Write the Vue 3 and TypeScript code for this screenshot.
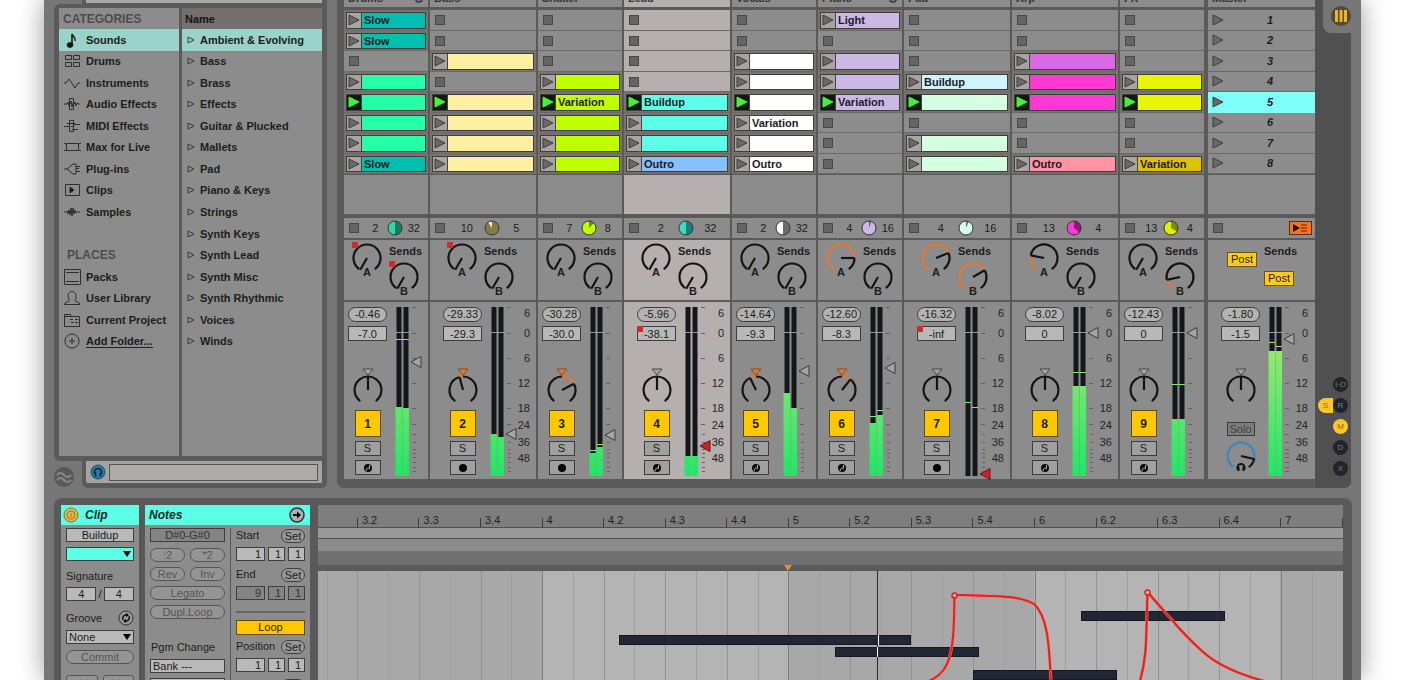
<script setup lang="ts">
interface Clip { name?: string; color: string; playing?: boolean }
interface Track {
  name: string
  wide?: boolean
  selected?: boolean
  badge?: boolean
  slots: (Clip | null)[]
  left: string
  right: string
  pie: string
  pieDark: string
  pieTurn: number
  a: number
  b: number
  aMark?: boolean
  bMark?: boolean
  peak: string
  volume: string
  volMark?: boolean
  pan: number
  midi?: boolean
  levels: [number, number]
  peaks: [number, number]
  fader: number
  faderRed?: boolean
}

const c = (color: string, name = '', playing = false): Clip => ({ color, name, playing })
const teal = '#00bfae', mint = '#24ffa8', cream = '#fff0a1', lime = '#bfff00', aqua = '#5cffe8'
const lilac = '#ccb8e4', pale = '#d4ffe0', pink = '#ff39d4', yellow = '#e6f500', white = '#ffffff'

const tracks: Track[] = [
  { name: 'Drums', badge: true, slots: [c(teal, 'Slow'), c(teal, 'Slow'), null, c(mint), c(mint, '', true), c(mint), c(mint), c(teal, 'Slow')],
    left: '2', right: '32', pie: '#35d6ab', pieDark: '#1b7c66', pieTurn: 180, a: -150, b: -150, aMark: true, bMark: true,
    peak: '-0.46', volume: '-7.0', pan: 0, midi: true, levels: [100, 101], peaks: [32, 32], fader: 55 },
  { name: 'Bass', wide: true, slots: [null, null, c(cream), null, c(cream, '', true), c(cream), c(cream), c(cream)],
    left: '10', right: '5', pie: '#fff0a1', pieDark: '#857a4c', pieTurn: 325, a: -150, b: -150, aMark: true,
    peak: '-29.33', volume: '-29.3', pan: -15, levels: [127, 130], peaks: [0, 0], fader: 127 },
  { name: 'Shaker', slots: [null, null, null, c(lime), c(lime, 'Variation', true), c(lime), c(lime), c(lime)],
    left: '7', right: '8', pie: '#bfff00', pieDark: '#6b8c10', pieTurn: 45, a: -150, b: -150,
    peak: '-30.28', volume: '-30.0', pan: 62, levels: [146, 140], peaks: [143, 137], fader: 128 },
  { name: 'Lead', wide: true, selected: true, slots: [null, null, null, null, c(aqua, 'Buildup', true), c(aqua), c(aqua), c('#86c0ff', 'Outro')],
    left: '2', right: '32', pie: '#3fd9c8', pieDark: '#1b7f78', pieTurn: 180, a: -150, b: -150,
    peak: '-5.96', volume: '-38.1', volMark: true, pan: 0, midi: true, levels: [149, 149], peaks: [0, 0], fader: 139, faderRed: true },
  { name: 'Vocals', slots: [null, null, c(white), c(white), c(white, '', true), c(white, 'Variation'), c(white), c(white, 'Outro')],
    left: '2', right: '32', pie: '#ffffff', pieDark: '#6c6c6c', pieTurn: 180, a: -150, b: -150,
    peak: '-14.64', volume: '-9.3', pan: -26, midi: true, levels: [86, 101], peaks: [0, 0], fader: 64 },
  { name: 'Piano', badge: true, slots: [c(lilac, 'Light'), null, c(lilac), c(lilac), c(lilac, 'Variation', true), null, null, null],
    left: '4', right: '16', pie: '#ccb8e4', pieDark: '#6d5c80', pieTurn: 20, a: 90, b: -150,
    peak: '-12.60', volume: '-8.3', pan: 38, midi: true, levels: [116, 108], peaks: [109, 103], fader: 61 },
  { name: 'Pad', wide: true, slots: [null, null, null, c('#d0f4fc', 'Buildup'), c(pale, '', true), null, c(pale), c(pale)],
    left: '4', right: '16', pie: '#d4ffe8', pieDark: '#5c8272', pieTurn: 25, a: 68, b: 60,
    peak: '-16.32', volume: '-inf', volMark: true, pan: 0, levels: [169, 169], peaks: [95, 100], fader: 167, faderRed: true },
  { name: 'Arp', wide: true, slots: [null, null, c('#d86be4'), c(pink), c(pink, '', true), null, null, c('#ff94a6', 'Outro')],
    left: '13', right: '4', pie: '#ff39d4', pieDark: '#8b1f76', pieTurn: 130, a: -79, b: -150,
    peak: '-8.02', volume: '0', pan: 0, midi: true, levels: [79, 79], peaks: [65, 65], fader: 26 },
  { name: 'FX', slots: [null, null, null, c(yellow), c(yellow, '', true), null, null, c('#dcc200', 'Variation')],
    left: '13', right: '4', pie: '#dff000', pieDark: '#7c8a10', pieTurn: 120, a: -150, b: -102,
    peak: '-12.43', volume: '0', pan: 0, midi: true, levels: [112, 112], peaks: [77, 77], fader: 26 },
]
const master = { levels: [44, 44], peaks: [35, 39], fader: 32 }

const pt = (cx: number, cy: number, r: number, deg: number): string => {
  const t = (deg * Math.PI) / 180
  return `${(cx + r * Math.sin(t)).toFixed(2)} ${(cy - r * Math.cos(t)).toFixed(2)}`
}
const arc = (cy: number, from: number, to: number): string => {
  const [s, e] = from < to ? [from, to] : [to, from]
  return `M${pt(15, cy, 13.5, s)}A13.5 13.5 0 ${e - s > 180 ? 1 : 0} 1 ${pt(15, cy, 13.5, e)}`
}
const needle = (cy: number, deg: number): string => `M15 ${cy}L${pt(15, cy, 13.5, deg)}`
const wedge = (deg: number): string => `M8 8L8 1A7 7 0 ${deg > 180 ? 1 : 0} 1 ${pt(8, 8, 7, deg)}Z`

const ticks = [0, 26, 51, 76, 101, 117, 127, 135, 142, 146, 150, 155, 160, 164]
const scale: [number, string][] = [[6, '6'], [26, '0'], [51, '6'], [76, '12'], [101, '18'], [118, '24'], [135, '36'], [151, '48']]

const categories = ['Sounds', 'Drums', 'Instruments', 'Audio Effects', 'MIDI Effects', 'Max for Live', 'Plug-ins', 'Clips', 'Samples']
const places = ['Packs', 'User Library', 'Current Project', 'Add Folder...']
const icons: Record<string, string> = {
  Drums: 'M2.500 3.500h6v4h-6zM10.500 3.500h6v4h-6zM2.500 10.500h6v4h-6zM10.500 10.500h6v4h-6z',
  Instruments: 'M1 9h2L6 5l6 9 3-5h2',
  'Audio Effects': 'M1 9h3l1-2 1 4M6.500 3.500h4v11h-4zM7 9l1-3 1 6 1-4M11 9l1-2 1 4 1-3 1 1h2',
  'MIDI Effects': 'M1 9.500h5M6.500 3.500h4v11h-4zM4 6.500h8M8 9.500h3M9 12.500h6M11 7.500h6',
  'Max for Live': 'M3.500 5.500h12v7h-12zM1 5l2 1M18 5l-2 1M1 13l2-1M18 13l-2-1',
  'Plug-ins': 'M1 9h3l6-5h3v10h-3L4 9M13 6.500h4M13 11.500h4M16 8.500h-3',
  Clips: 'M2.500 3.500h14v11h-14z',
  Samples: 'M1 9h2l1-1 1 3 1-4 1 5 1-7 1 8 1-8 1 6 1-4 1 3 1-1h3',
  Packs: 'M1.500 1.500h16v15h-16zM3 4.500h13M3 13.500h13',
  'User Library': 'M1.500 15.500c0-3 5-2 5-4C4 8 5 2.500 9 2.500s5 5.500 3 9c0 2 5 1 5 4z',
  'Current Project': 'M1.500 15.500v-12h6l1 2h8v10zM1.500 5.500h7M7 8.500h3M12 8.500h3M8 11.500h3M12 11.500h3',
  'Add Folder...': 'M9 2a7 7 0 1 0 0.01 0zM9 6v6M6 9h6',
}
const names = ['Ambient & Evolving', 'Bass', 'Brass', 'Effects', 'Guitar & Plucked', 'Mallets', 'Pad', 'Piano & Keys', 'Strings', 'Synth Keys', 'Synth Lead', 'Synth Misc', 'Synth Rhythmic', 'Voices', 'Winds']

const span = 1025
const pct = (x: number): string => `${(((x - 318) / span) * 100).toFixed(3)}%`
const beatLabels = ['3.2', '3.3', '3.4', '4', '4.2', '4.3', '4.4', '5', '5.2', '5.3', '5.4', '6', '6.2', '6.3', '6.4', '7', '']
const beats = beatLabels.map((label, i) => ({ label, x: 356.9 + i * 61.55 }))
const grid = Array.from({ length: 33 }, (_, i) => ({ x: 326.7 + i * 30.775, bar: (i - 7) % 8 === 0, beat: i % 2 === 1 }))
const playhead = 877.5
const notes = [
  { x: 619, w: 292, y: 64 }, { x: 835, w: 144, y: 76 }, { x: 1081, w: 144, y: 40 }, { x: 973, w: 144, y: 99 },
].map(n => ({ ...n, cut: n.x < playhead && playhead < n.x + n.w ? `${(((playhead - n.x) / n.w) * 100).toFixed(2)}%` : '' }))
const pointGroups = [
  { label: 'Start', values: ['1', '1', '1'] },
  { label: 'End', values: ['9', '1', '1'], off: true },
]
</script>

<template>
  <main class="window">
    <div class="upper">
      <aside class="browser">
        <div class="tab-top"></div>
        <div class="lists">
          <nav class="list cats" aria-label="Categories">
            <h2>CATEGORIES</h2>
            <div class="rows">
              <button v-for="n in categories" :key="n" class="row" :class="{ on: n === 'Sounds' }">
                <svg viewBox="0 0 18 18" class="ico">
                  <template v-if="n === 'Sounds'">
                    <ellipse cx="7" cy="14" rx="3" ry="2.400" fill="#101010" />
                    <path d="M9 14V3c1 3 4 3 3 7" fill="none" stroke="#101010" stroke-width="1.500" />
                  </template>
                  <path v-else :d="icons[n]" />
                  <path v-if="n === 'Clips'" d="M7 6v6l4-3z" class="solid" />
                </svg>{{ n }}
              </button>
              <span></span>
              <h3>PLACES</h3>
              <button v-for="n in places" :key="n" class="row">
                <svg viewBox="0 0 18 18" class="ico"><path :d="icons[n]" /></svg><span :class="{ add: n === 'Add Folder...' }">{{ n }}</span>
              </button>
            </div>
          </nav>
          <div class="list names">
            <h2>Name</h2>
            <div class="rows">
              <button v-for="(n, i) in names" :key="n" class="row" :class="{ on: i === 0 }">
                <svg viewBox="0 0 8 8" class="tri"><path d="M1 1v6l6-3z" /></svg>{{ n }}
              </button>
            </div>
          </div>
        </div>
        <div class="foot">
          <svg class="wave" viewBox="0 0 22 22"><circle cx="11" cy="11" r="10" fill="#595959" /><path d="M4 9q3.500-4 7 0t7 0M4 14q3.500-4 7 0t7 0" fill="none" stroke="#868686" stroke-width="2.200" /></svg>
          <div class="preview">
            <svg viewBox="0 0 16 16" class="phones"><circle cx="8" cy="8" r="7" fill="#2a7ca8" stroke="#1d4f6c" /><path d="M4.500 10V8a3.500 3.500 0 0 1 7 0v2M5.500 8.500v4M10.500 8.500v4" fill="none" stroke="#0e2533" stroke-width="1.700" /></svg>
            <input aria-label="Preview" />
          </div>
        </div>
      </aside>

      <section class="session">
        <div class="tracks">
          <article v-for="(t, ti) in tracks" :key="t.name" class="track" :class="{ wide: t.wide, sel: t.selected }">
            <header class="cell"><span>{{ t.name }}</span><i v-if="t.badge"></i></header>
            <div class="slots">
              <div v-for="(s, i) in t.slots" :key="i" class="slot" :class="{ full: s }">
                <div v-if="s" class="clip" :style="{ backgroundColor: s.color }">
                  <button class="play" :class="{ live: s.playing }" :aria-label="`Launch ${t.name} ${i + 1}`">
                    <svg viewBox="0 0 14 14"><path d="M2 2v10l10-5z" /></svg>
                  </button>
                  <span>{{ s.name }}</span>
                </div>
                <button v-else class="stop" :aria-label="`Stop ${t.name} ${i + 1}`"></button>
              </div>
            </div>
            <div class="cell drop"></div>
            <div class="cell status">
              <button class="stop" :aria-label="`Stop ${t.name}`"></button>
              <span>{{ t.left }}</span>
              <svg viewBox="0 0 16 16" class="pie"><circle cx="8" cy="8" r="7" :fill="t.pie" /><path :d="wedge(t.pieTurn)" :fill="t.pieDark" /><circle cx="8" cy="8" r="7" fill="none" stroke="#333" /></svg>
              <span>{{ t.right }}</span>
            </div>
            <div class="cell sends">
              <svg viewBox="0 0 30 36" class="knob">
                <path :d="arc(15, t.a > -150 ? t.a : -145, 145)" />
                <path v-if="t.a > -150" :d="arc(15, -145, t.a)" class="hot" />
                <path :d="needle(15, t.a)" />
                <rect v-if="t.aMark" y="-1" width="6" height="6" class="mark" />
                <text x="15" y="33">A</text>
              </svg>
              <div>
                <b>Sends</b>
                <svg viewBox="0 0 30 36" class="knob">
                  <path :d="arc(15, t.b > -150 ? t.b : -145, 145)" />
                  <path v-if="t.b > -150" :d="arc(15, -145, t.b)" class="hot" />
                  <path :d="needle(15, t.b)" />
                  <rect v-if="t.bMark" y="-1" width="6" height="6" class="mark" />
                  <text x="15" y="33">B</text>
                </svg>
              </div>
            </div>
            <div class="cell mixer">
              <div class="controls">
                <output class="peak">{{ t.peak }}</output>
                <div class="vol"><input :value="t.volume" :aria-label="`${t.name} volume`" /><i v-if="t.volMark"></i></div>
                <svg viewBox="0 0 30 37" class="knob pan">
                  <path :d="arc(22, -145, Math.min(t.pan, 0))" />
                  <path :d="arc(22, Math.max(t.pan, 0), 145)" />
                  <path v-if="t.pan" :d="arc(22, 0, t.pan)" class="hot" />
                  <path :d="needle(22, t.pan)" />
                  <path d="M10 1h10l-5 6z" class="ptr" :class="{ hotptr: t.pan }" />
                </svg>
                <button class="num">{{ ti + 1 }}</button>
                <button class="small">S</button>
                <button class="small" :aria-label="`Arm ${t.name}`">
                  <svg viewBox="0 0 10 10"><circle cx="5" cy="5" r="4" fill="#080808" /><path v-if="t.midi" d="M6.500 2v3.500M3.500 8a1.500 1.500 0 0 1 3-2" stroke="#b8b8b8" fill="none" /></svg>
                </button>
              </div>
              <svg viewBox="0 0 40 169" class="meter">
                <defs><linearGradient :id="`lv${ti}`" gradientUnits="userSpaceOnUse" x1="0" x2="0" y1="40" y2="165"><stop offset="0" stop-color="#96ea70" /><stop offset="1" stop-color="#22e765" /></linearGradient></defs>
                <rect width="5" height="169" x="0.500" fill="#14161b" /><rect x="7.500" width="5" height="169" fill="#14161b" />
                <path d="M0 25.500h13" stroke="#9a9a9a" />
                <template v-for="k in 2" :key="k">
                  <rect :x="(k - 1) * 7 - 0.5" :y="t.levels[k - 1]" width="6.500" :height="169 - t.levels[k - 1]" :fill="`url(#lv${ti})`" />
                  <rect v-if="t.peaks[k - 1]" :x="(k - 1) * 7" :y="t.peaks[k - 1]" width="6" height="1" fill="#7cf264" />
                </template>
                <path v-for="y in ticks" :key="y" :d="`M${y > 117 ? 17 : 16} ${y + 0.5}h${y > 117 ? 3 : 4}`" stroke="#606060" />
                <path :d="`M15 ${t.fader}l10-5.500v11z`" :fill="t.faderRed ? '#c8242a' : '#a4a4a4'" :stroke="t.faderRed ? '#701418' : '#3a3a3a'" />
                <template v-if="t.wide"><text v-for="([y, l], i) in scale" :key="i" x="39" :y="y + 4">{{ l }}</text></template>
              </svg>
            </div>
          </article>

          <article class="track wide master">
            <header class="cell"><span>Master</span></header>
            <div class="slots">
              <button v-for="i in 8" :key="i" class="scene" :class="{ cur: i === 5 }">
                <svg viewBox="0 0 14 14"><path d="M2 2v10l10-5z" /></svg><span>{{ i }}</span>
              </button>
            </div>
            <div class="cell drop"></div>
            <div class="cell status">
              <button class="stop" aria-label="Stop all clips"></button>
              <button class="back" aria-label="Back to arrangement"><svg viewBox="0 0 20 12"><path d="M3 2v8l7-4z" fill="#2a0e00" /><path d="M11 3h6M11 6h6M11 9h6" stroke="#6a2400" /></svg></button>
            </div>
            <div class="cell sends">
              <button class="post">Post</button>
              <div><b>Sends</b><button class="post">Post</button></div>
            </div>
            <div class="cell mixer">
              <div class="controls">
                <output class="peak">-1.80</output>
                <div class="vol"><input value="-1.5" aria-label="Master volume" /></div>
                <svg viewBox="0 0 30 37" class="knob pan"><path :d="arc(22, -145, 145)" /><path :d="needle(22, 0)" /><path d="M10 1h10l-5 6z" class="ptr" /></svg>
                <button class="solo">Solo</button>
                <svg viewBox="0 0 30 36" class="knob cue">
                  <path :d="arc(15, 100, 145)" /><path :d="arc(15, -145, 100)" class="blue" /><path :d="needle(15, 103)" />
                  <path d="M11.500 28.500v-2a3.500 3.500 0 0 1 7 0v2M12.500 26v4M17.500 26v4" />
                </svg>
              </div>
              <svg viewBox="0 0 40 169" class="meter">
                <rect width="5" height="169" x="0.500" fill="#14161b" /><rect x="7.500" width="5" height="169" fill="#14161b" />
                <path d="M0 25.500h13" stroke="#9a9a9a" />
                <template v-for="k in 2" :key="k">
                  <rect :x="(k - 1) * 7 - 0.5" :y="master.levels[k - 1]" width="6.500" :height="169 - master.levels[k - 1]" fill="url(#lv0)" />
                  <rect :x="(k - 1) * 7" :y="master.peaks[k - 1]" width="6" height="1" fill="#a4e65c" />
                </template>
                <path v-for="y in ticks" :key="y" :d="`M16 ${y + 0.5}h4`" stroke="#606060" />
                <path :d="`M15 ${master.fader}l10-5.500v11z`" fill="#a4a4a4" stroke="#3a3a3a" />
                <text v-for="([y, l], i) in scale" :key="i" x="39" :y="y + 4">{{ l }}</text>
              </svg>
            </div>
          </article>
        </div>
        <div class="side">
          <div class="notch"><button aria-label="Session view"><svg viewBox="0 0 22 22"><circle cx="11" cy="11" r="10" fill="#4f4a40" /><path d="M6.500 5v12M11 5v12M15.500 5v12" stroke="#eeb320" stroke-width="3" /></svg></button></div>
          <div class="toggles">
            <button>I·O</button>
            <div><button class="half">S</button><button>R</button></div>
            <button class="lit">M</button>
            <button>D</button>
            <button>X</button>
          </div>
        </div>
      </section>
    </div>

    <section class="detail">
      <div class="box clipbox">
        <h2><svg viewBox="0 0 16 16"><circle cx="8" cy="8" r="7" fill="#e2b84c" stroke="#8e6f22" /><circle cx="8" cy="8" r="4" fill="none" stroke="#9c7a28" /><path d="M8 6v4" stroke="#9c7a28" /></svg>Clip</h2>
        <div class="body">
          <input class="f center" value="Buildup" aria-label="Clip name" />
          <div class="pick"><select class="f aqua" aria-label="Clip colour"></select><svg viewBox="0 0 8 6"><path d="M0 0h8l-4 6z" /></svg></div>
          <label class="lab" for="sig">Signature</label>
          <div class="sig"><input id="sig" class="f center" value="4" />/<input class="f center" value="4" aria-label="Signature denominator" /></div>
          <div class="groove"><label class="lab" for="groove">Groove</label><button aria-label="Hot swap groove"><svg viewBox="0 0 16 16"><circle cx="8" cy="8" r="7" fill="#9a9a9a" stroke="#333" /><path d="M5 10a3.500 3.500 0 0 1 3-5M11 6a3.500 3.500 0 0 1-3 5" fill="none" stroke="#111" stroke-width="1.500" /><path d="M8 3l3 2-3 2zM8 9l-3 2 3 2z" /></svg></button></div>
          <div class="pick"><select id="groove" class="f"><option>None</option></select><svg viewBox="0 0 8 6"><path d="M0 0h8l-4 6z" /></svg></div>
          <button class="pill">Commit</button>
          <div class="pair nudge"><button class="pill sq">&lt;&lt;</button><button class="pill sq">&gt;&gt;</button></div>
        </div>
      </div>
      <div class="box notesbox">
        <h2>Notes<svg viewBox="0 0 16 16"><circle cx="8" cy="8" r="7" fill="#a8b4b0" stroke="#333" stroke-width="1.500" /><path d="M4 8h5" stroke="#111" stroke-width="2" /><path d="M8 4.500v7l4-3.500z" /></svg></h2>
        <div class="cols">
          <div class="colL">
            <input class="f center off" value="D#0-G#0" aria-label="Note range" />
            <div class="pair first"><button class="pill">:2</button><button class="pill">*2</button></div>
            <div class="pair"><button class="pill">Rev</button><button class="pill">Inv</button></div>
            <button class="pill">Legato</button>
            <button class="pill">Dupl.Loop</button>
            <label class="lab pgm" for="bank">Pgm Change</label>
            <input id="bank" class="f" value="Bank ---" />
            <input class="f" value="Sub ---" aria-label="Sub bank" />
          </div>
          <div class="colR">
            <template v-for="g in pointGroups" :key="g.label">
              <div class="head"><span>{{ g.label }}</span><button class="set">Set</button></div>
              <div class="trio"><input v-for="(v, i) in g.values" :key="i" class="f" :class="{ off: g.off }" :value="v" :aria-label="`${g.label} ${i + 1}`" /></div>
            </template>
            <hr />
            <button class="loop">Loop</button>
            <div class="head"><span>Position</span><button class="set">Set</button></div>
            <div class="trio"><input v-for="i in 3" :key="i" class="f" value="1" :aria-label="`Position ${i}`" /></div>
            <div class="head"><span>Length</span><button class="set">Set</button></div>
          </div>
        </div>
      </div>
      <div class="editor">
        <div class="ruler">
          <span v-for="b in beats" :key="b.x" :style="{ left: pct(b.x) }">{{ b.label }}</span>
        </div>
        <div class="loopbar"></div>
        <div class="scrub"></div>
        <div class="dark"></div>
        <div class="dark2"><svg :style="{ left: pct(788.5) }" viewBox="0 0 8 6"><path d="M0 0h8l-4 6z" fill="#e08a4c" /></svg></div>
        <div class="roll">
          <div v-for="x in [542, 1034.5]" :key="x" class="bar" :style="{ left: pct(x), width: pct(318 + 246) }"></div>
          <i v-for="g in grid" :key="g.x" :class="{ b: g.beat, m: g.bar }" :style="{ left: pct(g.x) }"></i>
          <div class="head-line" :style="{ left: pct(playhead) }"></div>
          <div v-for="n in notes" :key="n.x" class="note" :style="{ left: pct(n.x), width: pct(318 + n.w), top: n.y + 'px' }">
            <b v-if="n.cut" :style="{ left: n.cut }"></b>
          </div>
          <svg class="env" viewBox="318 571 1025 109" preserveAspectRatio="none">
            <g fill="none">
              <path v-for="k in 2" :key="k" :class="`e${k}`" d="M929 681C942 675 947 667 950 655C954 641 954 620 954.500 595H962C1000 596 1020 596 1034 604C1048 617 1049 645 1051 681M1140 681C1147 657 1146 640 1147.500 592C1157 603 1164 611 1172 620C1182 632 1191 641 1202 651C1217 665 1238 674 1264 681" />
              <circle cx="954.500" cy="595.500" r="2.500" class="dot" /><circle cx="1147.500" cy="592.500" r="2.500" class="dot" />
            </g>
          </svg>
        </div>
      </div>
    </section>
  </main>
</template>

<style>
body { margin: 0; background: #fff; overflow: hidden; }
</style>

<style scoped>
* { box-sizing: border-box; }
svg { display: block; flex: none; }
button, input, select { font: inherit; color: inherit; margin: 0; padding: 0; border: 0; background: none; border-radius: 0; min-width: 0; text-align: inherit; display: block; }
h2, h3 { margin: 0; }
.window { margin: 0 44px; height: 100vh; overflow: clip; overflow-clip-margin: 40px; display: flex; flex-direction: column; background: #767676; box-shadow: 0 0 24px rgba(0, 0, 0, .4); font: 11px "Liberation Sans", Arial, sans-serif; color: #1c1c1c; }
.upper { display: flex; gap: 10px; padding: 0 10px; flex: none; }

.browser { width: 273px; flex: none; }
.tab-top { margin-left: 28px; height: 4px; background: #a9a9a9; border: 0 solid #5a5a5a; border-width: 0 5px 1px 4px; }
.lists { display: flex; gap: 3px; padding: 4px 5px 5px; background: #5a5a5a; border-radius: 6px 0 0 6px; }
.list { background: #8c8c8c; height: 448px; }
.cats { width: 120px; }
.names { flex: 1; }
.list h2 { height: 21px; line-height: 22px; padding-left: 4px; font-size: 12px; color: #4c4c4c; }
.names h2 { background: #75706e; font-size: 11px; color: #141414; padding-left: 3px; }
.rows { height: 323px; display: grid; grid-auto-rows: 1fr; }
.list h3 { font-size: 12px; line-height: 22px; padding-left: 8px; color: #4c4c4c; }
.row { display: flex; align-items: center; font-weight: bold; white-space: nowrap; }
.row.on { background: #9ad3c9; }
.cats .row { padding-left: 4px; gap: 5px; }
.names .row { padding-left: 5px; gap: 5px; }
.ico { width: 18px; height: 18px; fill: none; stroke: #2e2e2e; stroke-width: 1; }
.solid { fill: #111; }
.tri { width: 8px; height: 8px; fill: none; stroke: #3a3a3a; }
.add { border-bottom: 1px solid #222; }
.foot { display: flex; height: 27px; }
.wave { width: 22px; height: 22px; margin: 5px 7px 0 -1px; }
.preview { flex: 1; display: flex; align-items: center; gap: 3px; background: #a4a4a4; border: 0 solid #5a5a5a; border-width: 0 5px 5px 4px; border-radius: 0 0 6px 6px; padding: 2px 4px; }
.phones { width: 16px; height: 16px; }
.preview input { flex: 1; height: 17px; border: 1px solid #555; background: #adaaa8; }

.session { flex: 1; min-width: 0; display: flex; background: #5a5a5a; border-radius: 0 0 7px 7px; padding-left: 7px; }
.tracks { flex: 1; min-width: 0; display: grid; grid-template-columns: 84fr 106fr 84fr 106fr 84fr 84fr 106fr 106fr 84fr 109fr; column-gap: 2px; padding-bottom: 9px; }
.track { min-width: 0; display: flex; flex-direction: column; }
.master { margin-left: 2px; }
.cell, .slots { background: #8c8c8c; }
.sel .cell, .sel .slots { background: #b5b0af; }
.sel .status { background: #8c8c8c; }
.track header { height: 7px; margin-bottom: 3px; overflow: hidden; display: flex; justify-content: space-between; align-items: flex-end; padding: 0 5px 4px 4px; font-weight: bold; line-height: 9px; color: #333; }
.track header i { width: 8px; height: 8px; border-radius: 50%; border: 2px solid #444; }
.slots { height: 164px; display: grid; grid-template-rows: repeat(8, 1fr); margin-bottom: 1px; }
.slot { border-bottom: 1px solid #6a6a6a; padding: 2px 2px 1px; display: flex; align-items: center; }
.slot.full { background: #78736d; }
.stop { width: 10px; height: 10px; margin-left: 3px; background: #646464; border: 1px solid #484848; flex: none; }
.clip { flex: 1; min-width: 0; align-self: stretch; display: flex; align-items: center; border: 1px solid #3e3e3e; font-weight: bold; overflow: hidden; }
.clip span { padding-left: 2px; line-height: 12px; color: #1b1b24; }
.play { width: 15px; align-self: stretch; background: #a8a4a4; border-right: 1px solid #444; flex: none; display: flex; align-items: center; }
.play svg, .scene svg { width: 14px; height: 14px; fill: #6c6868; stroke: #3c3c3c; }
.play.live { background: #101810; }
.play.live svg { fill: #45f03c; stroke: #45f03c; }
.scene { display: flex; align-items: center; border-bottom: 1px solid #6a6a6a; padding-left: 3px; font-weight: bold; font-style: italic; }
.scene span { flex: 1; text-align: center; }
.scene.cur { background: #80fffa; border-color: #80fffa; }
.drop { height: 39px; margin-bottom: 4px; }
.status { height: 20px; margin-bottom: 2px; display: flex; align-items: center; padding: 0 3px 0 2px; }
.status span { flex: 1; text-align: center; }
.status .stop { margin-right: 5px; }
.pie { width: 16px; height: 16px; }
.back { margin-left: auto; width: 23px; height: 14px; background: #f2741c; border: 1px solid #5e2a08; }
.back svg { width: 20px; height: 12px; }
.sends { height: 60px; margin-bottom: 2px; display: flex; gap: 7px; padding: 3px 0 0 8px; white-space: nowrap; }
.wide .sends { padding-left: 17px; }
.sends > div { width: 30px; }
.sends b { display: block; line-height: 16px; margin-bottom: 1px; }
.knob { width: 30px; height: 36px; fill: none; stroke: #141414; stroke-width: 2.2; overflow: visible; }
.sends > div .knob { margin-top: 3px; }
.knob text { fill: #1c1c1c; stroke: none; text-anchor: middle; font-weight: bold; font-size: 11px; }
.knob .hot { stroke: #dc7a38; }
.knob .blue { stroke: #3b86be; }
.knob .mark { fill: #d6282c; stroke: none; }
.knob .ptr { stroke: #444; stroke-width: 1; fill: #a4a4a4; }
.knob .hotptr { fill: #e27a34; stroke: #8a4618; }
.knob.pan { height: 37px; margin: 27px 0 5px; }
.post { height: 15px; line-height: 13px; width: 30px; text-align: center; background: #ffcb1c; border: 1px solid #6a5410; }
.master .sends > .post { margin: 9px 0 0 2px; }
.master .sends > div .post { margin-top: 12px; }
.mixer { height: 177px; display: flex; gap: 9px; padding: 5px 0 0 4px; }
.wide .mixer { padding-left: 13px; }
.controls { width: 39px; flex: none; display: flex; flex-direction: column; align-items: center; }
.peak { width: 39px; height: 15px; line-height: 13px; border: 1px solid #3c3c3c; border-radius: 8px; background: #b2b2b2; text-align: center; margin-bottom: 4px; white-space: nowrap; }
.vol { position: relative; }
.vol input { width: 39px; height: 15px; border: 1px solid #3c3c3c; background: #b8b8b8; text-align: center; }
.vol i { position: absolute; left: 0; top: 0; width: 6px; height: 6px; background: #d6282c; }
.num { width: 26px; height: 27px; background: #ffc800; border: 1px solid #5e4c08; text-align: center; font-weight: bold; font-size: 12px; margin-bottom: 4px; }
.small { width: 26px; height: 15px; border: 1px solid #3c3c3c; background: #a0a0a0; text-align: center; line-height: 13px; margin-bottom: 4px; }
.small svg { width: 10px; height: 10px; margin: auto; }
.solo { width: 28px; height: 14px; line-height: 12px; text-align: center; border: 1px solid #3c3c3c; background: #7c7c7c; color: #444; margin: 12px 0 5px; }
.meter { width: 40px; height: 169px; overflow: visible; }
.meter text { text-anchor: end; fill: #242424; font-size: 11px; }

.side { width: 36px; background: #505050; border-radius: 0 0 7px 0; display: flex; flex-direction: column; justify-content: space-between; align-items: flex-end; }
.notch { width: 28px; height: 33px; background: #767676; border-bottom-left-radius: 8px; padding: 5px 0 0 7px; }
.notch svg { width: 22px; height: 22px; }
.toggles { display: flex; flex-direction: column; align-items: flex-end; gap: 6px; padding: 0 3px 12px 0; }
.toggles > div { display: flex; }
.toggles button { width: 15px; height: 15px; border-radius: 8px; background: #22242c; color: #7c7c80; font-size: 8px; line-height: 15px; text-align: center; }
.toggles button.lit { background: #ffc52c; color: #8a6a10; }
.toggles button.half { background: #ffc52c; color: #8a6a10; border-radius: 8px 0 0 8px; }

.detail { flex: 1; min-height: 0; margin: 10px 9px 0 10px; background: #595959; border-radius: 8px 8px 0 0; display: flex; align-items: flex-start; padding: 7px 9px 0 7px; overflow: hidden; }
.box { background: #8c8c8c; height: 210px; flex: none; }
.box h2 { height: 20px; background: #5cffe6; font-style: italic; font-size: 12px; line-height: 20px; color: #0c2c28; display: flex; align-items: center; }
.box h2 svg { width: 16px; height: 16px; }
.clipbox { width: 78px; margin-right: 6px; }
.clipbox h2 { padding-left: 2px; gap: 6px; }
.notesbox { width: 165px; margin-right: 8px; }
.notesbox h2 { justify-content: space-between; padding: 0 5px 0 4px; }
.body { padding: 3px 5px; display: flex; flex-direction: column; }
.f { width: 100%; height: 14px; border: 1px solid #3e3e3e; background: #b9b9b9; padding: 0 2px; line-height: 12px; appearance: none; }
.f.center { text-align: center; }
.f.off { background: #848484; color: #333; }
.f.aqua { background: #5cffe6; }
.pick { position: relative; margin-top: 5px; }
.pick svg { position: absolute; right: 3px; top: 4px; width: 8px; height: 6px; }
.lab { display: block; line-height: 14px; white-space: nowrap; }
.body > .lab { margin: 8px 0 4px; }
.sig { display: flex; gap: 2px; line-height: 14px; }
.groove { display: flex; justify-content: space-between; align-items: center; height: 16px; margin: 9px 0 0; }
.groove svg { width: 16px; height: 16px; }
.groove + .pick { margin-top: 4px; }
.pill { width: 100%; height: 14px; border: 1px solid #555; border-radius: 7px; line-height: 12px; text-align: center; color: #565656; background: #949494; }
.pill.sq { border-radius: 3px; color: #333; }
.body > .pill { margin-top: 6px; }
.pair { display: flex; gap: 5px; }
.nudge { margin-top: 11px; }
.cols { display: flex; padding: 3px 5px; }
.colL { width: 75px; margin-right: 5px; display: flex; flex-direction: column; gap: 5px; }
.colL .first { margin-top: 1px; }
.colL .pgm { margin: 16px 0 0 1px; }
.colR { flex: 1; min-width: 0; border-left: 1px solid #555; padding-left: 5px; }
.head { display: flex; justify-content: space-between; align-items: center; height: 15px; margin-bottom: 4px; white-space: nowrap; }
.head span { min-width: 0; overflow: hidden; line-height: 15px; }
.set { width: 24px; flex: none; height: 14px; border: 1px solid #3e3e3e; border-radius: 7px; text-align: center; line-height: 12px; background: #989898; }
.trio { display: grid; grid-template-columns: 1fr 17px 17px; gap: 3px; margin-bottom: 6px; }
.trio .f { text-align: right; padding-right: 3px; }
hr { margin: 11px 0 7px; border: 0; border-top: 2px solid #666; }
.loop { width: 100%; height: 15px; line-height: 13px; background: #ffc800; border: 1px solid #5e4c08; text-align: center; margin-bottom: 4px; }

.editor { flex: 1; min-width: 0; align-self: stretch; display: flex; flex-direction: column; overflow: hidden; }
.ruler { height: 23px; background: #7e7e7e; border-bottom: 1px solid #505050; position: relative; flex: none; }
.ruler span { position: absolute; top: 13px; height: 9px; border-left: 1px solid #3c3c3c; width: 3px; padding-left: 4px; line-height: 4px; color: #222; white-space: nowrap; }
.loopbar { height: 11px; background: #999; border-bottom: 1px solid #505050; flex: none; }
.scrub { height: 12px; background: #8b8b8b; flex: none; }
.dark { height: 14px; background: #717171; flex: none; }
.dark2 { height: 6px; background: #5a5a5a; position: relative; flex: none; }
.dark2 svg { position: absolute; top: 0; width: 8px; height: 6px; margin-left: -4px; }
.roll { flex: 1; background: #a8a8a8; position: relative; overflow: hidden; }
.bar { position: absolute; top: 0; bottom: 0; background: #b4b4b4; }
.roll i { position: absolute; top: 0; bottom: 0; width: 1px; background: #9f9f9f; }
.roll i.b { background: #939393; }
.roll i.m { background: #7c7c7c; }
.note { position: absolute; height: 10px; background: #232733; box-shadow: inset 0 0 0 1px #141722; }
.note b { position: absolute; top: 0; bottom: 0; width: 1px; background: #fff; }
.head-line { position: absolute; top: 0; bottom: 0; width: 1px; background: #2a2a2a; }
.env { position: absolute; left: 0; top: 0; width: 100%; height: 109px; }
.e1 { stroke: #ec7a76; stroke-width: 3; }
.e2 { stroke: #e8201c; stroke-width: 2; }
.dot { stroke: #e8201c; stroke-width: 1.5; fill: #e8b0b0; }
</style>
